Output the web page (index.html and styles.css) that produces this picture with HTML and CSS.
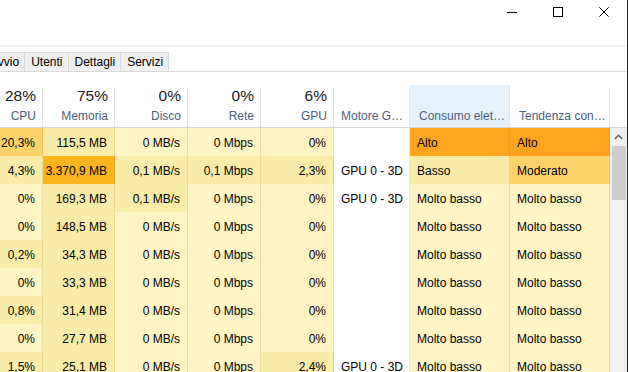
FILE: index.html
```html
<!DOCTYPE html>
<html lang="it">
<head>
    <meta charset="UTF-8">
    <meta name="viewport" content="width=device-width, initial-scale=1.0">
    <title>Gestione attività</title>
    <link rel="stylesheet" href="styles.css">
</head>
<body>
    <div class="window">
        <div class="titlebar">
            <div class="ctl">
                <svg width="10" height="10" viewBox="0 0 10 10"><path d="M0 5.5H10" stroke="#000" stroke-width="1"/></svg>
            </div>
            <div class="ctl">
                <svg width="10" height="10" viewBox="0 0 10 10"><rect x="0.5" y="0.5" width="9" height="9" fill="none" stroke="#000" stroke-width="1"/></svg>
            </div>
            <div class="ctl">
                <svg width="10" height="10" viewBox="0 0 10 10"><path d="M0.3 0.3L9.7 9.7M9.7 0.3L0.3 9.7" stroke="#000" stroke-width="1"/></svg>
            </div>
        </div>
        <div class="menuline"></div>

        <div class="tabs">
            <div class="tab first">Avvio</div>
            <div class="tab">Utenti</div>
            <div class="tab">Dettagli</div>
            <div class="tab">Servizi</div>
        </div>

        <div class="head">
            <div class="hcell num"><span class="val">28%</span><span class="lbl">CPU</span></div>
            <div class="hcell num"><span class="val">75%</span><span class="lbl">Memoria</span></div>
            <div class="hcell num"><span class="val">0%</span><span class="lbl">Disco</span></div>
            <div class="hcell num"><span class="val">0%</span><span class="lbl">Rete</span></div>
            <div class="hcell num"><span class="val">6%</span><span class="lbl">GPU</span></div>
            <div class="hcell txt"><span class="lbl">Motore G…</span></div>
            <div class="hcell txt wide sorted"><span class="lbl">Consumo elet…</span></div>
            <div class="hcell txt wide"><span class="lbl">Tendenza con…</span></div>
            <div class="hcell corner"></div>
        </div>

        <div class="grid-body">
            <div class="rows" id="rows"></div>
            <div class="scrollbar">
                <div class="sb-arrow">
                    <svg width="9" height="6" viewBox="0 0 9 6"><path d="M0.8 5L4.5 1.3L8.2 5" fill="none" stroke="#606060" stroke-width="1.6"/></svg>
                </div>
                <div class="sb-thumb"></div>
            </div>
        </div>
    </div>

    <script>
        // cpu, memoria, disco, rete, gpu, motore, consumo, tendenza : [text, heat level]
        const data = [
            [['20,3%', 3], ['115,5 MB', 1], ['0 MB/s', 0], ['0 Mbps', 0], ['0%', 0], ['', 'w'], ['Alto', 4], ['Alto', 4]],
            [['4,3%', 1], ['3.370,9 MB', 5], ['0,1 MB/s', 1], ['0,1 Mbps', 1], ['2,3%', 1], ['GPU 0 - 3D', 'w'], ['Basso', 1], ['Moderato', 3]],
            [['0%', 0], ['169,3 MB', 1], ['0,1 MB/s', 1], ['0 Mbps', 0], ['0%', 0], ['GPU 0 - 3D', 'w'], ['Molto basso', 0], ['Molto basso', 0]],
            [['0%', 0], ['148,5 MB', 1], ['0 MB/s', 0], ['0 Mbps', 0], ['0%', 0], ['', 'w'], ['Molto basso', 0], ['Molto basso', 0]],
            [['0,2%', 1], ['34,3 MB', 1], ['0 MB/s', 0], ['0 Mbps', 0], ['0%', 0], ['', 'w'], ['Molto basso', 0], ['Molto basso', 0]],
            [['0%', 0], ['33,3 MB', 1], ['0 MB/s', 0], ['0 Mbps', 0], ['0%', 0], ['', 'w'], ['Molto basso', 0], ['Molto basso', 0]],
            [['0,8%', 1], ['31,4 MB', 1], ['0 MB/s', 0], ['0 Mbps', 0], ['0%', 0], ['', 'w'], ['Molto basso', 0], ['Molto basso', 0]],
            [['0%', 0], ['27,7 MB', 1], ['0 MB/s', 0], ['0 Mbps', 0], ['0%', 0], ['', 'w'], ['Molto basso', 0], ['Molto basso', 0]],
            [['1,5%', 1], ['25,1 MB', 1], ['0 MB/s', 0], ['0 Mbps', 0], ['2,4%', 1], ['GPU 0 - 3D', 'w'], ['Molto basso', 0], ['Molto basso', 0]]
        ];

        const rows = document.getElementById('rows');
        data.forEach(function(r) {
            const row = document.createElement('div');
            row.className = 'row';
            r.forEach(function(c, i) {
                const cell = document.createElement('div');
                cell.className = 'cell ' + (i < 5 ? 'num' : 'txt') + ' heat-' + c[1];
                cell.textContent = c[0];
                row.appendChild(cell);
            });
            rows.appendChild(row);
        });
    </script>
</body>
</html>
```

FILE: styles.css
```css
:root {
    --heat-0: #fff4c4;
    --heat-1: #f9eca8;
    --heat-3: #fed26b;
    --heat-4: #fea41e;
    --heat-5: #fcb41e;
    --label-color: #4c607a;
    --cols: 43px 72px 73px 73px 73px 76px 100px 100px;
}
html, body {
    margin: 0;
    padding: 0;
    overflow: hidden;
    background: white;
}
body {
    font-family: 'Liberation Sans', Arial, sans-serif;
    font-size: 12px;
    color: #000;
}
.window {
    width: 627px;
    height: 372px;
    border-right: 1px solid #262626;
    overflow: hidden;
}
.titlebar {
    display: flex;
    justify-content: flex-end;
    height: 45px;
}
.ctl {
    width: 46px;
    height: 22px;
    display: flex;
    align-items: center;
    justify-content: center;
}
.ctl svg {
    display: block;
    margin-top: 1px;
}
.menuline {
    height: 2px;
    background: #f0f0f0;
    margin-bottom: 5px;
}
.tabs {
    display: flex;
    height: 19px;
    border-bottom: 1px solid #d9d9d9;
    overflow: hidden;
}
.tab {
    background: #f0f0f0;
    border: 1px solid #d9d9d9;
    border-bottom: none;
    border-left: none;
    padding: 0 5px 0 6px;
    line-height: 18px;
}
.tab.first {
    margin-left: -16px;
}
.head {
    display: grid;
    grid-template-columns: var(--cols) 17px;
    margin-top: 13px;
    border-bottom: 1px solid #d5d5d5;
}
.hcell {
    position: relative;
    height: 42px;
    display: flex;
    flex-direction: column;
    justify-content: flex-end;
    padding-bottom: 1px;
    box-sizing: border-box;
}
.hcell::after {
    content: "";
    position: absolute;
    right: 0;
    top: 2px;
    bottom: 0;
    width: 1px;
    background: #e5e5e5;
}
.hcell.corner::after {
    display: none;
}
.hcell.num {
    align-items: flex-end;
    padding-right: 7px;
}
.hcell.txt {
    padding-left: 7px;
}
.hcell.wide {
    padding-left: 9px;
}
.hcell.sorted {
    background: #e5f1fb;
}
.val {
    font-size: 15.5px;
    line-height: 20px;
    color: #1a1a1a;
}
.lbl {
    color: var(--label-color);
    line-height: 20px;
    white-space: nowrap;
}
.grid-body {
    display: flex;
}
.rows {
    width: 610px;
}
.row {
    display: grid;
    grid-template-columns: var(--cols);
    height: 28px;
}
.cell {
    line-height: 26px;
    padding-top: 2px;
    border-right: 1px solid rgba(170, 130, 20, 0.18);
    white-space: nowrap;
    overflow: hidden;
}
.cell.num {
    text-align: right;
    padding-right: 7px;
}
.cell.txt {
    padding-left: 7px;
}
.heat-w {
    background: white;
}
.heat-0 {
    background: var(--heat-0);
}
.heat-1 {
    background: var(--heat-1);
}
.heat-3 {
    background: var(--heat-3);
}
.heat-4 {
    background: var(--heat-4);
}
.heat-5 {
    background: var(--heat-5);
}
.scrollbar {
    width: 17px;
    height: 260px;
    background: #f0f0f0;
}
.sb-arrow {
    height: 18px;
    display: flex;
    align-items: center;
    justify-content: center;
}
.sb-thumb {
    margin: 0 1px 0 2px;
    height: 54px;
    background: #cdcdcd;
}
```
